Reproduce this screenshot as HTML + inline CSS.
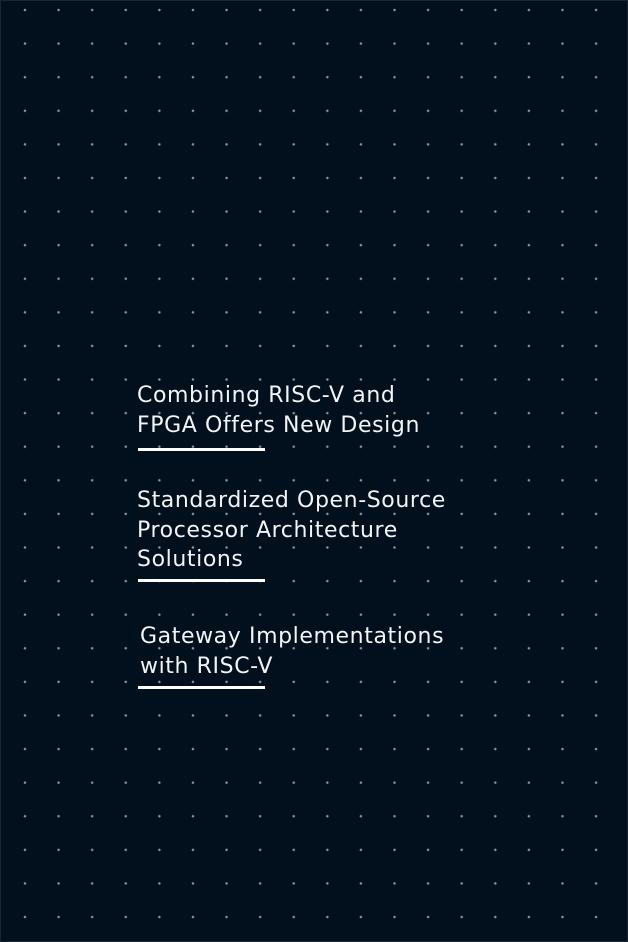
<!DOCTYPE html>
<html><head><style>
html,body{margin:0;padding:0}
body{width:628px;height:942px;background-color:#020f1c;background-image:radial-gradient(circle at center,#8a949e 0,#8a949e 1px,rgba(0,0,0,0) 1.5px);background-size:33.6px 33.6px;background-position:8.2px -6.8px;position:relative;overflow:hidden;box-shadow:inset 0 0 0 1px #1a2633;font-family:"DejaVu Sans","Liberation Sans",sans-serif}
.t{position:absolute;color:#f2f4f6;font-size:22px;line-height:29.5px;letter-spacing:0.6px;white-space:nowrap}
.u{position:absolute;height:3px;width:127px;background:#fff}
</style></head><body>
<div class="t" style="left:137px;top:381px">Combining RISC-V and<br>FPGA Offers New Design</div>
<div class="u" style="left:138px;top:448px"></div>
<div class="t" style="left:137px;top:486px">Standardized Open-Source<br>Processor Architecture<br>Solutions</div>
<div class="u" style="left:138px;top:579px"></div>
<div class="t" style="left:140px;top:622px">Gateway Implementations<br>with RISC-V</div>
<div class="u" style="left:138px;top:686px"></div>
</body></html>
